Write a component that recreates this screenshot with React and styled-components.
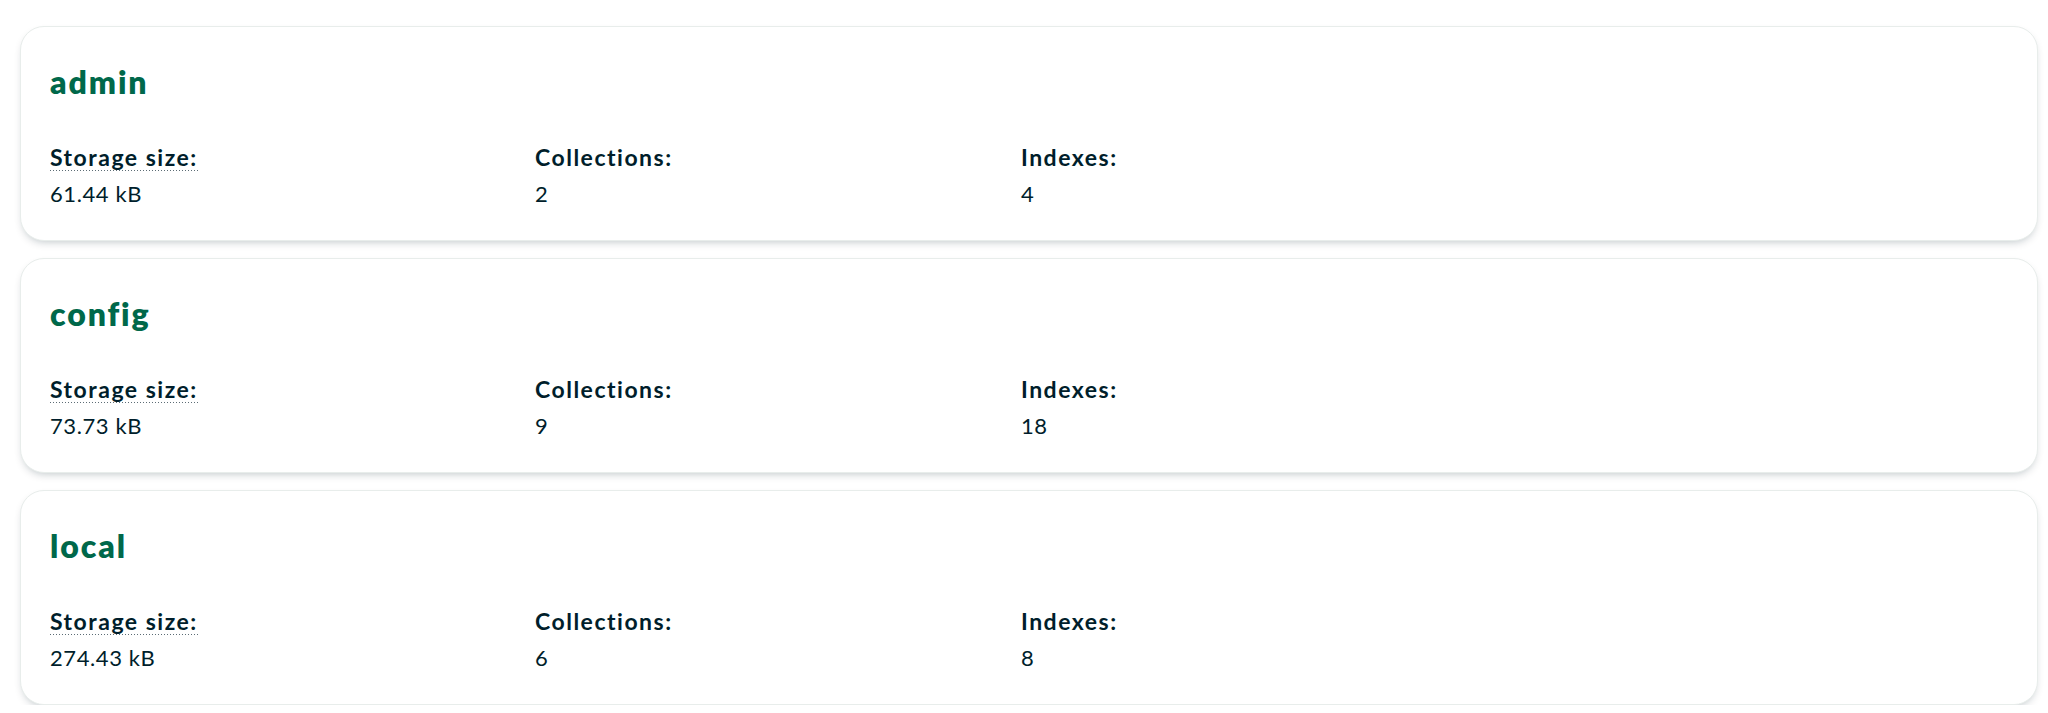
import React from 'react';
import styled, { createGlobalStyle } from 'styled-components';

const GlobalStyle = createGlobalStyle`
  html, body {
    margin: 0;
    padding: 0;
    background: #ffffff;
  }
  body {
    font-family: Lato, "Open Sans", sans-serif;
    color: #001E2B;
  }
`;

const List = styled.div`
  display: flex;
  flex-direction: column;
  gap: 17px;
  padding: 26px 10px 0 20px;
`;

const Card = styled.div`
  background: #ffffff;
  border: 1px solid #E8EDEB;
  border-radius: 24px;
  box-shadow: 0 4px 10px -4px rgba(0, 30, 43, 0.3);
  padding: 37px 29px 32px;
`;

const Title = styled.h3`
  margin: 0 0 43px;
  font-family: Lato, sans-serif;
  font-weight: 800;
  font-size: 32px;
  line-height: 36px;
  letter-spacing: 1.9px;
  color: #00684A;
`;

const Stats = styled.div`
  display: grid;
  grid-template-columns: 485px 486px 1fr;
`;

const Stat = styled.div`
  display: flex;
  flex-direction: column;
  gap: 9px;
`;

const Label = styled.div`
  font-weight: 700;
  font-size: 23px;
  line-height: 28px;
  letter-spacing: 1.5px;
  color: #001E2B;
`;

const Hint = styled.span`
  background-image: linear-gradient(to right, #5C6C75 40%, transparent 0%);
  background-position: bottom left;
  background-size: 3px 1px;
  background-repeat: repeat-x;
`;

const Value = styled.div`
  font-weight: 400;
  font-size: 22px;
  line-height: 28px;
  letter-spacing: 0.6px;
  color: #001E2B;
`;

const databases = [
  { name: 'admin', storage: '61.44 kB', collections: 2, indexes: 4 },
  { name: 'config', storage: '73.73 kB', collections: 9, indexes: 18 },
  { name: 'local', storage: '274.43 kB', collections: 6, indexes: 8 },
];

function DatabaseCard({ db }) {
  return (
    <Card>
      <Title>{db.name}</Title>
      <Stats>
        <Stat>
          <Label><Hint>Storage size:</Hint></Label>
          <Value>{db.storage}</Value>
        </Stat>
        <Stat>
          <Label>Collections:</Label>
          <Value>{db.collections}</Value>
        </Stat>
        <Stat>
          <Label>Indexes:</Label>
          <Value>{db.indexes}</Value>
        </Stat>
      </Stats>
    </Card>
  );
}

export default function App() {
  return (
    <>
      <GlobalStyle />
      <List>
        {databases.map(db => (
          <DatabaseCard key={db.name} db={db} />
        ))}
      </List>
    </>
  );
}
